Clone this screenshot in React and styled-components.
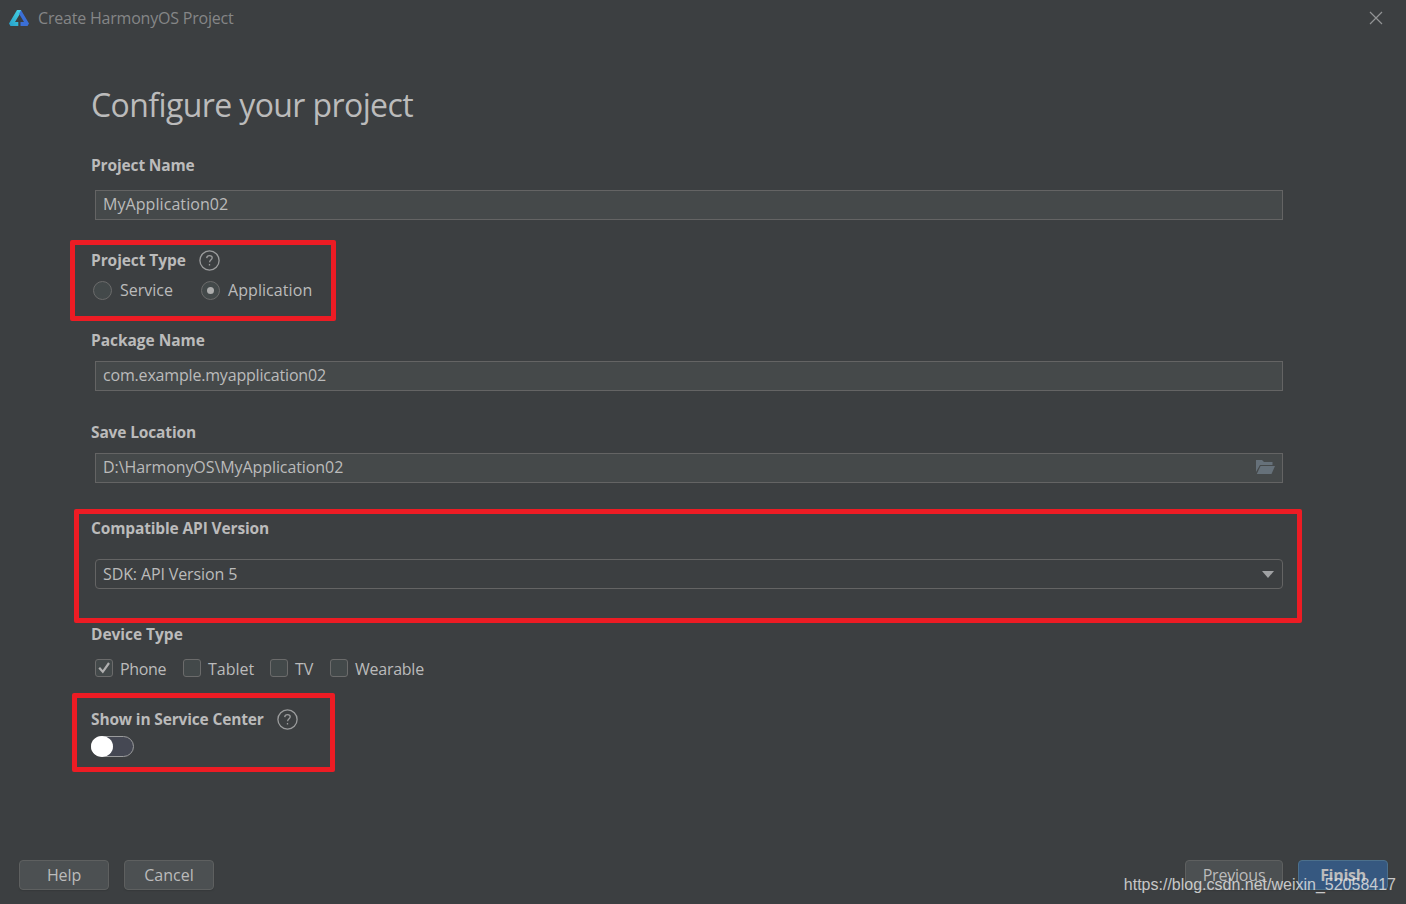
import React from "react";
import styled, { createGlobalStyle } from "styled-components";

const Global = createGlobalStyle`
  * { box-sizing: border-box; }
  body { margin: 0; background: #3c3f41; overflow: hidden; }
`;

const Dialog = styled.div`
  position: relative;
  display: flex;
  flex-direction: column;
  width: 1406px;
  height: 904px;
  background: #3c3f41;
  color: #bbbbbb;
  font: 16px/22px "Open Sans", "Noto Sans", sans-serif;
  white-space: nowrap;
`;

const TitleBar = styled.header`
  display: flex;
  align-items: center;
  gap: 8px;
  height: 38px;
  padding: 0 23px 2px 8px;
  color: #858687;
`;

const Text = styled.span`
  letter-spacing: ${(p) => p.$spacing || 0}px;
`;

const CloseIcon = styled.svg`
  margin-left: auto;
`;

const Form = styled.main`
  flex: 1;
  display: flex;
  flex-direction: column;
  padding: 0 123px 0 91px;
`;

const Heading = styled.h1`
  margin: 44px 0 26px;
  height: 46px;
  font-size: 32px;
  line-height: 46px;
  font-weight: 400;
  letter-spacing: -0.6px;
`;

const Section = styled.section`
  display: flex;
  flex-direction: column;
  height: ${(p) => p.$height}px;
`;

const Label = styled.h2`
  display: flex;
  align-items: center;
  gap: 13px;
  margin: 0;
  height: 22px;
  font-size: 15.5px;
  line-height: 22px;
  font-weight: 700;
  letter-spacing: ${(p) => p.$spacing ?? -0.14}px;
`;

const Field = styled.div`
  display: flex;
  align-items: center;
  justify-content: space-between;
  height: 30px;
  margin: ${(p) => p.$gap}px 0 0 4px;
  padding: 0 7px 2px;
  border: 1px solid #646464;
  background: #45494a;
`;

const Select = styled(Field)`
  padding: 0 8px 0 7px;
  border-radius: 4px;
  background: #3c3f41;
`;

const Options = styled.div`
  display: flex;
  align-items: center;
  height: 22px;
  margin: ${(p) => p.$gap}px 0 0 ${(p) => p.$indent}px;
`;

const Option = styled.label`
  display: flex;
  align-items: center;
  gap: 8px;
  width: ${(p) => p.$width}px;
`;

const Radio = styled.span`
  display: flex;
  align-items: center;
  justify-content: center;
  width: 19px;
  height: 19px;
  border: 1px solid #6b6b6b;
  border-radius: 50%;
  background: #43494a;
`;

const Dot = styled.span`
  width: 7px;
  height: 7px;
  border-radius: 50%;
  background: #adadad;
`;

const Check = styled.span`
  display: flex;
  align-items: center;
  justify-content: center;
  flex: none;
  width: 18px;
  height: 18px;
  margin: -2px -0.5px 0 0.5px;
  border: 1px solid #6b6b6b;
  border-radius: 3px;
  background: #43494a;
`;

const Toggle = styled.span`
  display: flex;
  width: 43px;
  height: 21px;
  margin-top: 6px;
  border: 1px solid #9b9c9d;
  border-radius: 11px;
  background: #454853;
`;

const Knob = styled.span`
  width: 22px;
  height: 21px;
  margin: -1px;
  border-radius: 50%;
  background: #fff;
`;

const Footer = styled.footer`
  display: flex;
  gap: 15px;
  height: 44px;
  padding: 0 18px 14px 19px;
`;

const Button = styled.button`
  width: ${(p) => p.$width || 90}px;
  height: 30px;
  margin: 0;
  margin-left: ${(p) => (p.$push ? "auto" : "0")};
  padding: 0;
  border: 1px solid ${(p) => (p.$primary ? "#4c708c" : "#5e6060")};
  border-radius: 4px;
  background: ${(p) => (p.$primary ? "#365880" : "#4c5052")};
  box-shadow: 0 1px 1px #36393b;
  color: #bbbbbb;
  font: inherit;
  font-weight: ${(p) => (p.$primary ? 700 : 400)};
  letter-spacing: ${(p) => p.$spacing || 0}px;
  line-height: 28px;
`;

const Highlight = styled.div`
  position: absolute;
  left: ${(p) => p.$x}px;
  top: ${(p) => p.$y}px;
  width: ${(p) => p.$w}px;
  height: ${(p) => p.$h}px;
  border: 5px solid #ed1c24;
  border-radius: 2px;
`;

const Watermark = styled.div`
  position: absolute;
  right: 10px;
  bottom: 9px;
  color: rgba(225, 225, 225, 0.85);
  font: 16px/20px "Liberation Sans", Arial, sans-serif;
`;

const HelpIcon = () => (
  <svg width="21" height="21" viewBox="0 0 21 21" fill="none" stroke="#9b9c9d" strokeWidth="1.3">
    <circle cx="10.5" cy="10.5" r="9.6" />
    <path d="M7.7 8.1C7.8 6.4 8.9 5.6 10.5 5.6c1.6 0 2.7.9 2.7 2.2 0 1.9-2.6 2-2.6 4.5M10.5 14v1.6" />
  </svg>
);

const CheckBox = ({ checked }) => (
  <Check>
    {checked && (
      <svg width="16" height="16" viewBox="0 0 16 16" fill="none" stroke="#b0b0b0" strokeWidth="2.2">
        <path d="M3.200 7.800 6.800 11.800 13 3" />
      </svg>
    )}
  </Check>
);

export default function App() {
  return (
    <Dialog>
      <Global />
      <TitleBar>
        <svg width="22" height="18" viewBox="0 0 22 18">
          <defs>
            <linearGradient id="left" x1="1" y1="0" x2="0" y2="1">
              <stop offset="0" stopColor="#48d6e2" />
              <stop offset="1" stopColor="#259fcb" />
            </linearGradient>
          </defs>
          <path d="M9 1h4l-1.500 4.500L7 13h3.300v4H2.500L1 14.500z" fill="url(#left)" />
          <path d="M13 1l8 13.500-1.500 2.500h-7v-4H16L11.500 5.500 10 3z" fill="#3b6fd6" />
          <path d="M9 1h4l-2 4z" fill="#45cde6" />
        </svg>
        <Text $spacing={-0.2}>Create HarmonyOS Project</Text>
        <CloseIcon width="14" height="14" viewBox="0 0 14 14" stroke="#929495" strokeWidth="1.2">
          <path d="M1 1 13 13M13 1 1 13" />
        </CloseIcon>
      </TitleBar>

      <Form>
        <Heading>Configure your project</Heading>
        <Section $height={95}>
          <Label>Project Name</Label>
          <Field $gap={14}><Text $spacing={0.07}>MyApplication02</Text></Field>
        </Section>
        <Section $height={80}>
          <Label $spacing={-0.08}>Project Type <HelpIcon /></Label>
          <Options $gap={8} $indent={2}>
            <Option $width={108}><Radio /><Text>Service</Text></Option>
            <Option><Radio><Dot /></Radio><Text $spacing={0.07}>Application</Text></Option>
          </Options>
        </Section>
        <Section $height={92}>
          <Label $spacing={-0.04}>Package Name</Label>
          <Field $gap={10}><Text $spacing={-0.18}>com.example.myapplication02</Text></Field>
        </Section>
        <Section $height={96}>
          <Label>Save Location</Label>
          <Field $gap={9.5}>
            <Text $spacing={-0.08}>D:\HarmonyOS\MyApplication02</Text>
            <svg width="19" height="14" viewBox="0 0 19 14" fill="#66717a">
              <path d="M0 0h6l2 2h8.500v3H4L0 12z" />
              <path d="M4.500 6H19l-3.500 8H.8z" />
            </svg>
          </Field>
        </Section>
        <Section $height={106}>
          <Label>Compatible API Version</Label>
          <Select $gap={20}>
            <Text $spacing={-0.12}>SDK: API Version 5</Text>
            <svg width="12" height="7" viewBox="0 0 12 7" fill="#a0a2a4"><path d="M0 0h12L6 7z" /></svg>
          </Select>
        </Section>
        <Section $height={85}>
          <Label $spacing={-0.03}>Device Type</Label>
          <Options $gap={13} $indent={3}>
            <Option $width={88}><CheckBox checked /><Text $spacing={-0.35}>Phone</Text></Option>
            <Option $width={87}><CheckBox /><Text>Tablet</Text></Option>
            <Option $width={60}><CheckBox /><Text>TV</Text></Option>
            <Option><CheckBox /><Text $spacing={-0.25}>Wearable</Text></Option>
          </Options>
        </Section>
        <Section>
          <Label $spacing={-0.16}>Show in Service Center <HelpIcon /></Label>
          <Toggle><Knob /></Toggle>
        </Section>
      </Form>

      <Footer>
        <Button $spacing={-0.1}>Help</Button>
        <Button>Cancel</Button>
        <Button $push $width={98} $spacing={-0.2}>Previous</Button>
        <Button $primary $width={90} $spacing={-0.3}>Finish</Button>
      </Footer>

      <Highlight $x={70} $y={239.5} $w={265.5} $h={81} />
      <Highlight $x={74} $y={508.5} $w={1227.5} $h={114} />
      <Highlight $x={72} $y={692.5} $w={262.5} $h={79} />
      <Watermark>https://blog.csdn.net/weixin_52058417</Watermark>
    </Dialog>
  );
}
